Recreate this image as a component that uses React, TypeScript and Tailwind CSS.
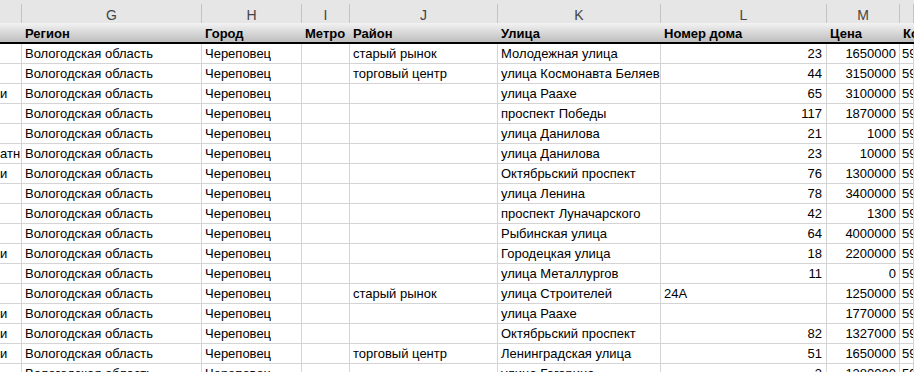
import React from "react";

const cols = ["", "G", "H", "I", "J", "K", "L", "M", ""];

const headers = ["", "Регион", "Город", "Метро", "Район", "Улица", "Номер дома", "Цена", "Ко"];

type Row = { f?: string; j?: string; k: string; l?: string; m: string };

const rows: Row[] = [
  { j: "старый рынок", k: "Молодежная улица", l: "23", m: "1650000" },
  { j: "торговый центр", k: "улица Космонавта Беляева", l: "44", m: "3150000" },
  { f: "и", k: "улица Раахе", l: "65", m: "3100000" },
  { k: "проспект Победы", l: "117", m: "1870000" },
  { k: "улица Данилова", l: "21", m: "1000" },
  { f: "атн", k: "улица Данилова", l: "23", m: "10000" },
  { f: "и", k: "Октябрьский проспект", l: "76", m: "1300000" },
  { k: "улица Ленина", l: "78", m: "3400000" },
  { k: "проспект Луначарского", l: "42", m: "1300" },
  { k: "Рыбинская улица", l: "64", m: "4000000" },
  { f: "и", k: "Городецкая улица", l: "18", m: "2200000" },
  { k: "улица Металлургов", l: "11", m: "0" },
  { j: "старый рынок", k: "улица Строителей", l: "24А", m: "1250000" },
  { f: "и", k: "улица Раахе", m: "1770000" },
  { f: "и", k: "Октябрьский проспект", l: "82", m: "1327000" },
  { f: "и", j: "торговый центр", k: "Ленинградская улица", l: "51", m: "1650000" },
  { k: "улица Гагарина", l: "3", m: "1380000" },
];

const grid =
  "grid grid-cols-[22px_180px_100px_48px_148px_163px_166px_73px_1fr]";

const cell =
  "h-[20px] border-r border-b border-[#d4d4d4] flex items-center overflow-hidden whitespace-nowrap";

export default function App() {
  return (
    <div className="w-[914px] h-[372px] overflow-hidden bg-white font-['Liberation_Sans',Arial,sans-serif] text-[13px] text-black">
      {/* column letters */}
      <div className="h-[23px] bg-[#e6e6e6] pt-[4px]">
        <div className={grid}>
          {cols.map((c, i) => (
            <div
              key={i}
              className="h-[19px] border-r border-[#c4c4c4] flex items-center justify-center pt-[4px] text-[#444] text-[14px]"
            >
              {c}
            </div>
          ))}
        </div>
      </div>

      {/* table header row */}
      <div
        className={`${grid} h-[21px] bg-gradient-to-b from-[#f3f3f3] to-[#bebebe] border-b-2 border-black`}
      >
        {headers.map((h, i) => (
          <div key={i} className="flex items-center pl-[3px] pt-[2px] font-bold whitespace-nowrap overflow-hidden">
            {h}
          </div>
        ))}
      </div>

      {/* data rows */}
      {rows.map((r, i) => (
        <div key={i} className={grid}>
          <div className={cell}>{r.f}</div>
          <div className={`${cell} pl-[3px]`}>Вологодская область</div>
          <div className={`${cell} pl-[3px]`}>Череповец</div>
          <div className={cell}></div>
          <div className={`${cell} pl-[3px]`}>{r.j}</div>
          <div className={`${cell} pl-[3px]`}>{r.k}</div>
          <div
            className={`${cell} ${
              r.l && isNaN(Number(r.l)) ? "pl-[3px]" : "justify-end pr-[4px]"
            }`}
          >
            {r.l}
          </div>
          <div className={`${cell} justify-end pr-[3px]`}>{r.m}</div>
          <div className={`${cell} pl-[2px]`}>5900</div>
        </div>
      ))}
    </div>
  );
}
